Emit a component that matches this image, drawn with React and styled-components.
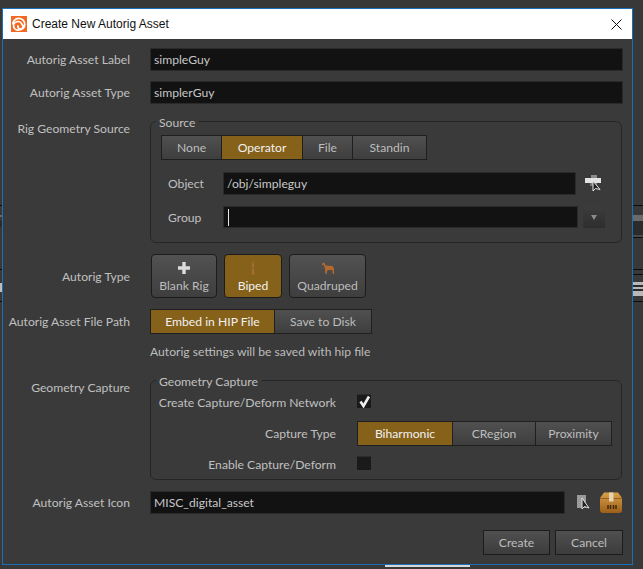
import React from "react";
import styled, { createGlobalStyle } from "styled-components";

const Global = createGlobalStyle`
  html, body { margin: 0; padding: 0; background: #383838; }
  body { width: 643px; height: 569px; overflow: hidden; position: relative; font-family: "Lato", "Open Sans", sans-serif; font-size: 12.15px; color: #c4c4c4; }
  * { box-sizing: border-box; }
`;

const Desktop = styled.div`
  width: 643px;
  height: 569px;
  padding: 8px 10px 4px 2px;
`;
const Backdrop = styled.div`
  position: absolute;
  left: ${(p) => (p.$left ? 0 : 633)}px;
  width: ${(p) => (p.$left ? 2 : 10)}px;
  top: ${(p) => p.$top}px;
  height: ${(p) => p.$h}px;
  background: ${(p) => p.$c};
`;
const BottomSliver = styled.div`
  position: absolute;
  left: 385px;
  top: 565px;
  width: 85px;
  height: 2px;
  background: #d8d8d8;
`;
const Window = styled.div`
  width: 631px;
  height: 557px;
  border: 1px solid #1a70b8;
  background: #3a3a3a;
  display: flex;
  flex-direction: column;
  position: relative;
`;
const TitleBar = styled.div`
  height: 30px;
  background: #fff;
  display: flex;
  align-items: center;
  padding: 0 10px 0 8px;
  color: #111;
  flex: none;
`;
const TitleText = styled.span`
  margin-left: 5px;
  flex: 1;
  font-family: "Liberation Sans", sans-serif;
  font-size: 12px;
`;
const Form = styled.div`
  display: flex;
  flex-direction: column;
  padding: 9px 9px 0 0;
`;
const Row = styled.div`
  display: flex;
  align-items: ${(p) => p.$align || "center"};
  margin-top: ${(p) => p.$mt || 0}px;
`;
const Label = styled.div`
  width: 127px;
  margin-right: 20px;
  flex: none;
  text-align: right;
  color: #c0c0c0;
  white-space: nowrap;
`;
const Field = styled.div`
  height: ${(p) => p.$h || 23}px;
  width: ${(p) => (p.$w ? p.$w + "px" : "auto")};
  flex: ${(p) => (p.$w ? "none" : 1)};
  background: #121212;
  border: 1px solid #2a2a2a;
  color: #c8c8c8;
  display: flex;
  align-items: center;
  padding-left: 3px;
  white-space: nowrap;
`;
const Caret = styled.span`
  width: 1px;
  height: 17px;
  background: #e8e8e8;
  margin-left: 1px;
`;
const Group = styled.section`
  position: relative;
  width: 472px;
  height: ${(p) => p.$h}px;
  border: 1px solid #262626;
  border-radius: 6px;
  padding: ${(p) => p.$pad};
`;
const Legend = styled.div`
  position: absolute;
  left: 5px;
  top: -6px;
  padding: 0 4px 0 3px;
  line-height: 14px;
  background: #3a3a3a;
  color: #c0c0c0;
`;
const Seg = styled.div`
  display: flex;
  margin-left: ${(p) => p.$ml || 0}px;
`;
const SegBtn = styled.div`
  height: 25px;
  width: ${(p) => p.$w}px;
  display: flex;
  align-items: center;
  justify-content: center;
  border: 1px solid #1f1f1f;
  margin-left: -1px;
  color: ${(p) => (p.$on ? "#f2f2f2" : "#bdbdbd")};
  background: ${(p) => (p.$on ? "#85611a" : "linear-gradient(#505050, #3e3e3e)")};
  white-space: nowrap;
  &:first-child { margin-left: 0; }
`;
const TypeBtns = styled.div`
  display: flex;
  gap: 7px;
  margin-left: 1px;
`;
const TypeBtn = styled.div`
  width: ${(p) => p.$w}px;
  height: 44px;
  border: 1px solid #1c1c1c;
  border-radius: 4px;
  background: ${(p) => (p.$on ? "#85611a" : "linear-gradient(#525252, #3e3e3e)")};
  color: ${(p) => (p.$on ? "#f2f2f2" : "#bdbdbd")};
  display: flex;
  flex-direction: column;
  align-items: center;
  padding-top: 5px;
`;
const TypeIcon = styled.svg`
  width: 16px;
  height: 16px;
  flex: none;
`;
const TypeText = styled.span`
  line-height: 15px;
  margin-top: 2px;
`;
const IconSlot = styled.svg`
  flex: none;
  margin-left: ${(p) => p.$ml || 0}px;
`;
const Dropdown = styled.div`
  width: 22px;
  height: 22px;
  margin-left: 5px;
  background: linear-gradient(#3c3c3c, #2e2e2e);
  display: flex;
  align-items: center;
  justify-content: center;
  flex: none;
`;
const DropTri = styled.span`
  width: 0;
  height: 0;
  border-left: 3.5px solid transparent;
  border-right: 3.5px solid transparent;
  border-top: 5px solid #8a8a8a;
`;
const SubLabel = styled.div`
  width: ${(p) => p.$w}px;
  text-align: ${(p) => p.$align || "left"};
  flex: none;
  white-space: nowrap;
  padding-left: ${(p) => p.$pl || 0}px;
  color: #c0c0c0;
`;
const Note = styled.div`
  line-height: 14px;
  color: #bdbdbd;
`;
const Check = styled.div`
  width: 14px;
  height: 14px;
  background: #1a1a1a;
  border-top: 1px solid #2c2c2c;
  flex: none;
  margin: -4px 0 0 21px;
  display: flex;
  align-items: center;
  justify-content: center;
`;
const Footer = styled.div`
  display: flex;
  justify-content: flex-end;
  gap: 5px;
  margin-top: 16px;
`;
const FootBtn = styled.div`
  width: ${(p) => p.$w}px;
  height: 25px;
  border: 1px solid #1c1c1c;
  background: linear-gradient(#505050, #3c3c3c);
  color: #bdbdbd;
  display: flex;
  align-items: center;
  justify-content: center;
`;

const NodePicker = () => (
  <IconSlot $ml={9} width="17" height="17" viewBox="0 0 17 17">
    <rect x="6" y="0" width="6" height="3" fill="#8c8c8c" />
    <rect x="0" y="3" width="16" height="5" fill="#e2e2e2" />
    <rect x="5" y="8" width="7" height="3" fill="#777" />
    <path d="M8 6 L8 16 L10.5 13.5 L15 14.5 Z" fill="#222" stroke="#e4e4e4" strokeWidth="1" />
  </IconSlot>
);

const strips = [
  [205, 1, "#0c0c0c"], [215, 6, "#6a6a6a"], [221, 14, "#2b2b2b"], [235, 2, "#4a4a4a"],
  [237, 1, "#0c0c0c"], [269, 1, "#0c0c0c"], [274, 1, "#0c0c0c"], [301, 1, "#0c0c0c"],
];
const leftStrips = [
  [205, 1, "#0c0c0c"], [215, 2, "#6a6a6a"], [221, 6, "#2b2b2b"], [269, 1, "#0c0c0c"],
  [283, 9, "#bdbdbd"], [301, 1, "#0c0c0c"],
];

export default function App() {
  return (
    <Desktop>
      <Global />
      {strips.map(([t, h, c]) => <Backdrop key={t} $top={t} $h={h} $c={c} />)}
      {leftStrips.map(([t, h, c]) => <Backdrop key={t} $left $top={t} $h={h} $c={c} />)}
      <Backdrop $top={282} $h={14} $c="#b8b8b8" />
      <Backdrop $top={285} $h={2} $c="#2a2a2a" />
      <Backdrop $top={289} $h={2} $c="#2a2a2a" />
      <BottomSliver />
      <Window>
        <TitleBar>
          <svg width="16" height="16" viewBox="0 0 16 16">
            <rect width="16" height="16" fill="#f26a21" />
            <path d="M1.8 8.5 A6 5.8 0 1 1 8 14 A4.3 4.3 0 1 1 11 8.5 A2.5 2.5 0 1 1 7.2 9.4" fill="none" stroke="#fff" strokeWidth="1.7" />
          </svg>
          <TitleText>Create New Autorig Asset</TitleText>
          <svg width="11" height="11" viewBox="0 0 11 11">
            <path d="M.5.5 L10.5 10.5 M10.5.5 L.5 10.5" stroke="#111" strokeWidth="1" />
          </svg>
        </TitleBar>
        <Form>
          <Row>
            <Label>Autorig Asset Label</Label>
            <Field>simpleGuy</Field>
          </Row>
          <Row $mt={10}>
            <Label>Autorig Asset Type</Label>
            <Field>simplerGuy</Field>
          </Row>
          <Row $mt={17} $align="flex-start">
            <Label>Rig Geometry Source</Label>
            <Group $h={122} $pad="13px 0 0 10px">
              <Legend>Source</Legend>
              <Seg>
                <SegBtn $w={61}>None</SegBtn>
                <SegBtn $w={82} $on>Operator</SegBtn>
                <SegBtn $w={51}>File</SegBtn>
                <SegBtn $w={75}>Standin</SegBtn>
              </Seg>
              <Row $mt={12}>
                <SubLabel $w={62} $pl={7}>Object</SubLabel>
                <Field $w={353}>/obj/simpleguy</Field>
                <NodePicker />
              </Row>
              <Row $mt={11}>
                <SubLabel $w={62} $pl={7}>Group</SubLabel>
                <Field $w={355} $h={22}><Caret /></Field>
                <Dropdown><DropTri /></Dropdown>
              </Row>
            </Group>
          </Row>
          <Row $mt={11}>
            <Label>Autorig Type</Label>
            <TypeBtns>
              <TypeBtn $w={66}>
                <TypeIcon viewBox="0 0 16 16">
                  <path d="M8 2 V14 M2 8 H14" stroke="#dcdcdc" strokeWidth="3.4" />
                </TypeIcon>
                <TypeText>Blank Rig</TypeText>
              </TypeBtn>
              <TypeBtn $w={58} $on>
                <TypeIcon viewBox="0 0 16 16">
                  <path d="M8 1.5 V14.5 M6.5 5.5 L8 4 L9 7 M7 14.5 L7.5 9 M9 14.5 L8.5 9" stroke="#a8703a" strokeWidth="1" fill="none" />
                </TypeIcon>
                <TypeText>Biped</TypeText>
              </TypeBtn>
              <TypeBtn $w={77}>
                <TypeIcon viewBox="0 0 16 16">
                  <path d="M2 3.5 L4.5 2.5 L5.5 5.5 L12.5 6 L14 8.5 L14 14 L12.8 14 L12.4 10 L7.5 10 L6.6 14 L5.4 14 L4.8 7.5 L3.8 5.2 L2 4.8 Z" fill="#b5692c" />
                </TypeIcon>
                <TypeText>Quadruped</TypeText>
              </TypeBtn>
            </TypeBtns>
          </Row>
          <Row $mt={11}>
            <Label>Autorig Asset File Path</Label>
            <Seg>
              <SegBtn $w={125} $on>Embed in HIP File</SegBtn>
              <SegBtn $w={98}>Save to Disk</SegBtn>
            </Seg>
          </Row>
          <Row $mt={11}>
            <Label />
            <Note>Autorig settings will be saved with hip file</Note>
          </Row>
          <Row $mt={21} $align="flex-start">
            <Label>Geometry Capture</Label>
            <Group $h={100} $pad="14px 0 0 0">
              <Legend>Geometry Capture</Legend>
              <Row>
                <SubLabel $w={185} $align="right">Create Capture/Deform Network</SubLabel>
                <Check>
                  <svg width="13" height="13" viewBox="0 0 13 13">
                    <path d="M2.5 6.5 L5.5 11 L11 1.5" fill="none" stroke="#eee" strokeWidth="2.6" />
                  </svg>
                </Check>
              </Row>
              <Row $mt={11}>
                <SubLabel $w={185} $align="right">Capture Type</SubLabel>
                <Seg $ml={21}>
                  <SegBtn $w={96} $on>Biharmonic</SegBtn>
                  <SegBtn $w={84}>CRegion</SegBtn>
                  <SegBtn $w={77}>Proximity</SegBtn>
                </Seg>
              </Row>
              <Row $mt={11}>
                <SubLabel $w={185} $align="right">Enable Capture/Deform</SubLabel>
                <Check />
              </Row>
            </Group>
          </Row>
          <Row $mt={11}>
            <Label>Autorig Asset Icon</Label>
            <Field $w={415}>MISC_digital_asset</Field>
            <IconSlot $ml={12} width="14" height="17" viewBox="0 0 14 17">
              <rect x="0" y="1" width="9" height="13" fill="#9a9a9a" />
              <path d="M5 4 L5 15 L7.5 12.5 L12 14 Z" fill="#222" stroke="#e4e4e4" strokeWidth="1" />
            </IconSlot>
            <IconSlot $ml={9} width="22" height="21" viewBox="0 0 22 21">
              <defs>
                <linearGradient id="boxg" x1="0" y1="0" x2="0" y2="1">
                  <stop offset="0" stopColor="#d9a04a" />
                  <stop offset="1" stopColor="#9c5f18" />
                </linearGradient>
              </defs>
              <path d="M4 0.5 H18 L22 6 V18 Q22 21 19 21 H3 Q0 21 0 18 V6 Z" fill="url(#boxg)" />
              <path d="M0 6.5 H22" stroke="#8a5414" strokeWidth="0.8" />
              <rect x="9" y="0.5" width="4.5" height="9" fill="#e6d2ad" />
              <path d="M8 13 V17 M10.5 13 V17 M13.5 13 V17 M16 13 V17" stroke="#3a2508" strokeWidth="1.4" />
            </IconSlot>
          </Row>
          <Footer>
            <FootBtn $w={67}>Create</FootBtn>
            <FootBtn $w={68}>Cancel</FootBtn>
          </Footer>
        </Form>
      </Window>
    </Desktop>
  );
}
